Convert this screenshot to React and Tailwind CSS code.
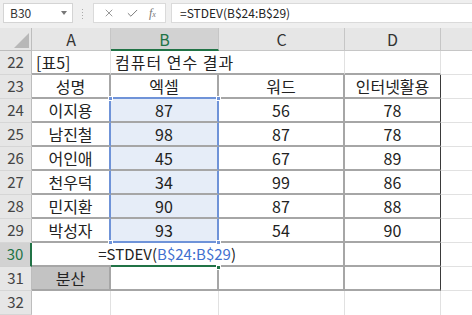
// excel sheet: 컴퓨터 연수 결과 with STDEV being typed in B30

import { X, Check } from 'lucide-react';

const GREY = 'border-[#a6a6a6]';

const data = [
  ['이지용', '87', '56', '78'],
  ['남진철', '98', '87', '78'],
  ['어인애', '45', '67', '89'],
  ['천우덕', '34', '99', '86'],
  ['민지환', '90', '87', '88'],
  ['박성자', '93', '54', '90'],
];

const RowHead = ({ n, active }) => (
  <div
    className={
      active
        ? 'flex items-center justify-center bg-[#d2d2d2] text-[#217346] text-[15px] border-r-2 border-r-[#217346] border-b border-b-[#d0d0d0]'
        : 'flex items-center justify-center bg-[#e6e6e6] text-[#444] text-[15px] border-r border-r-[#bdbdbd] border-b border-b-[#d6d6d6]'
    }
  >
    {n}
  </div>
);

const Cell = ({ className, children }) => (
  <div className={`flex items-center justify-center text-[16px] text-[#222] whitespace-nowrap ${className}`}>
    {children}
  </div>
);

const Corner = ({ x, y, green }) => (
  <div
    className={`absolute w-[5px] h-[5px] ${green ? 'bg-[#217346]' : 'bg-[#6f93d8]'} border border-white`}
    style={{ left: x - 3, top: y - 3 }}
  />
);

export default function App() {
  return (
    <div className="w-[472px] h-[315px] overflow-hidden bg-white font-['Noto_Sans_CJK_KR','Noto_Sans',sans-serif]">
      {/* formula bar */}
      <div className="h-[28px] bg-[#efefef] flex items-start pt-[3px]">
        <div className="ml-[3px] w-[70px] h-[20px] bg-white border border-[#d4d4d4] flex items-center justify-between pl-[6px] pr-[5px] text-[12px] text-[#333]">
          <span>B30</span>
          <span className="w-0 h-0 border-l-[3px] border-r-[3px] border-t-[4px] border-l-transparent border-r-transparent border-t-[#777]" />
        </div>
        <div className="ml-[9px] mt-[6px] flex flex-col gap-[2px]">
          <span className="w-[1px] h-[1px] bg-[#aaa]" />
          <span className="w-[1px] h-[1px] bg-[#aaa]" />
          <span className="w-[1px] h-[1px] bg-[#aaa]" />
          <span className="w-[1px] h-[1px] bg-[#aaa]" />
        </div>
        <div className="ml-[10px] w-[73px] h-[20px] bg-white border border-[#dadada] flex items-center justify-around px-[4px] text-[#777]">
          <X size={12} strokeWidth={1.5} />
          <Check size={13} strokeWidth={1.8} />
          <span className="font-['Liberation_Serif',serif] italic text-[12px] leading-none">
            f<span className="text-[8px]">x</span>
          </span>
        </div>
        <div className="ml-[5px] flex-1 h-[20px] bg-white border border-[#dadada] border-r-0 flex items-center pl-[8px] text-[12px] text-[#222]">
          =STDEV(B$24:B$29)
        </div>
      </div>

      {/* sheet grid */}
      <div className="relative grid grid-cols-[32px_79px_108px_126px_96px_31px] grid-rows-[23px_repeat(11,24px)]">
        {/* column headers */}
        <div className="bg-[#e6e6e6] border-r border-b border-[#bdbdbd] flex items-end justify-end pr-[2px] pb-[2px]">
          <span className="w-0 h-0 border-l-[15px] border-l-transparent border-b-[15px] border-b-[#b8b8b8]" />
        </div>
        <div className="bg-[#e6e6e6] border-r border-b border-[#c6c6c6] flex items-center justify-center text-[16px] text-[#333]">A</div>
        <div className="bg-[#d2d2d2] border-r border-r-[#c6c6c6] border-b-2 border-b-[#217346] flex items-center justify-center text-[16px] text-[#217346]">B</div>
        <div className="bg-[#e6e6e6] border-r border-b border-[#c6c6c6] flex items-center justify-center text-[16px] text-[#333]">C</div>
        <div className="bg-[#e6e6e6] border-r border-b border-[#c6c6c6] flex items-center justify-center text-[16px] text-[#333]">D</div>
        <div className="bg-[#e6e6e6] border-b border-[#c6c6c6]" />

        {/* row 22 */}
        <RowHead n={22} />
        <Cell className="justify-start pl-[4px] border-r border-r-[#e1e1e1] border-b-2 border-b-[#a6a6a6]">[표5]</Cell>
        <Cell className="justify-start pl-[4px] tracking-[1px] border-b-2 border-b-[#a6a6a6] overflow-visible">컴퓨터 연수 결과</Cell>
        <Cell className="border-r border-r-[#e1e1e1] border-b-2 border-b-[#a6a6a6]" />
        <Cell className="border-r border-r-[#e1e1e1] border-b-2 border-b-[#a6a6a6]" />
        <Cell className="border-b border-[#e1e1e1]" />

        {/* row 23 */}
        <RowHead n={23} />
        <Cell className={`border-r-2 border-b-2 ${GREY}`}>성명</Cell>
        <Cell className="border-r-2 border-r-[#a6a6a6] border-b-2 border-b-[#6f93d8]">엑셀</Cell>
        <Cell className={`border-r-2 border-b-2 ${GREY}`}>워드</Cell>
        <Cell className="border-r border-r-[#3a3a3a] border-b-2 border-b-[#a6a6a6]">인터넷활용</Cell>
        <Cell className="border-b border-[#e1e1e1]" />

        {/* rows 24-29 */}
        {data.map((r, i) => [
          <RowHead key={`h${i}`} n={24 + i} />,
          <Cell key={`a${i}`} className="border-r-2 border-r-[#6f93d8] border-b-2 border-b-[#a6a6a6]">{r[0]}</Cell>,
          <Cell
            key={`b${i}`}
            className={
              i === data.length - 1
                ? 'bg-[#e6edf8] border-r-2 border-r-[#6f93d8] border-b-2 border-b-[#6f93d8]'
                : 'bg-[#e6edf8] border-r-2 border-r-[#6f93d8] border-b-2 border-b-[#a6a6a6]'
            }
          >
            {r[1]}
          </Cell>,
          <Cell key={`c${i}`} className={`border-r-2 border-b-2 ${GREY}`}>{r[2]}</Cell>,
          <Cell key={`d${i}`} className="border-r border-r-[#3a3a3a] border-b-2 border-b-[#a6a6a6]">{r[3]}</Cell>,
          <Cell key={`e${i}`} className="border-b border-[#e1e1e1]" />,
        ])}

        {/* row 30: formula being typed */}
        <RowHead n={30} active />
        <Cell className="border-b-2 border-b-[#a6a6a6]" />
        <Cell className="justify-end border-b-2 border-b-[#217346] overflow-visible">
          <span className="mr-[-17px] text-[15px] text-[#222]">
            =STDEV(<span className="text-[#3f6fd0]">B$24:B$29</span>)
          </span>
        </Cell>
        <Cell className={`border-r-2 border-b-2 ${GREY}`} />
        <Cell className="border-r border-r-[#3a3a3a] border-b-2 border-b-[#a6a6a6]" />
        <Cell className="border-b border-[#e1e1e1]" />

        {/* row 31 */}
        <RowHead n={31} />
        <Cell className={`bg-[#c3c3c3] border-r-2 border-b-2 ${GREY}`}>분산</Cell>
        <Cell className={`border-r-2 border-b-2 ${GREY}`} />
        <Cell className={`border-r-2 border-b-2 ${GREY}`} />
        <Cell className="border-r border-r-[#3a3a3a] border-b-2 border-b-[#a6a6a6]" />
        <Cell className="border-b border-[#e1e1e1]" />

        {/* row 32 */}
        <RowHead n={32} />
        <Cell className="border-r border-[#e1e1e1]" />
        <Cell className="border-r border-[#e1e1e1]" />
        <Cell className="border-r border-[#e1e1e1]" />
        <Cell className="border-r border-[#e1e1e1]" />
        <Cell />

        {/* range handles */}
        <Corner x={111} y={71} />
        <Corner x={219} y={71} />
        <Corner x={111} y={215} />
        <Corner x={219} y={215} />
        <Corner x={219} y={240} green />
      </div>
    </div>
  );
}
